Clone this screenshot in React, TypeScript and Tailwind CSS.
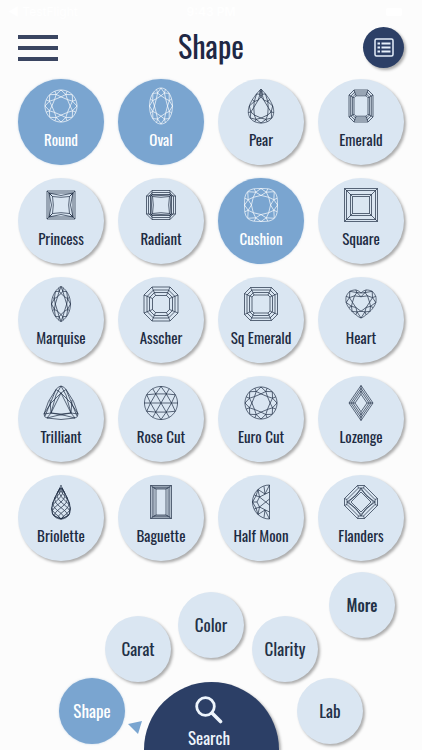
import { useState } from "react";
import type { ReactNode } from "react";

type Point = [number, number];
type Outline = (t: number) => Point;

const TAU = Math.PI * 2;

const poly = (points: Point[], close = true) =>
  "M" + points.map(([x, y]) => `${x.toFixed(2)} ${y.toFixed(2)}`).join("L") + (close ? "Z" : "");

const trace = (outline: Outline, steps = 96) =>
  poly(Array.from({ length: steps }, (_, i) => outline((i / steps) * TAU)));

/* A brilliant cut: girdle, eight kite facets and a star around the table. */
function brilliant(outline: Outline, cy = 0, star = 0.8, table = 0.6) {
  const at = (k: number, scale: number): Point => {
    const [x, y] = outline(((k % 16) / 16) * TAU);
    return [x * scale, cy + (y - cy) * scale];
  };
  let d = trace(outline);
  for (let k = 0; k < 16; k += 2) {
    d += poly([at(k, table), at(k + 1, star), at(k + 2, table)], false);
    d += poly([at(k, table), at(k + 2, table)], false);
    d += poly([at(k, 1), at(k + 1, star), at(k + 2, 1)], false);
    d += poly([at(k + 1, star), at(k + 1, 1)], false);
  }
  return d;
}

const ellipse = (a: number, b: number): Outline => (t) => [a * Math.sin(t), -b * Math.cos(t)];
const pear: Outline = (t) => [16.5 * Math.sin(t) * Math.abs(Math.sin(t / 2)), -17 * Math.cos(t)];
const marquise: Outline = (t) => [9.5 * Math.sin(t) * Math.sqrt(Math.abs(Math.sin(t))), -17.5 * Math.cos(t)];
const cushion: Outline = (t) => {
  const s = Math.sin(t);
  const c = Math.cos(t);
  const r = 16.5 / Math.pow(Math.abs(s) ** 3.2 + Math.abs(c) ** 3.2, 1 / 3.2);
  return [r * s, -r * c];
};

/* Radii of the heart from its notch round to its tip, every 22.5 degrees. */
const heartRadii = [9.5, 13.6, 15.8, 16, 14.8, 13.2, 12.6, 13.2, 15.5];
const heart: Outline = (t) => {
  const turn = Math.min(t, TAU - t) / (TAU / 16);
  const i = Math.min(7, Math.floor(turn));
  const r = heartRadii[i] + (heartRadii[i + 1] - heartRadii[i]) * (turn - i);
  return [r * Math.sin(t), -1.5 - r * Math.cos(t)];
};

const octagon = (w: number, h: number, c: number): Point[] => [
  [-w + c, -h], [w - c, -h], [w, -h + c], [w, h - c],
  [w - c, h], [-w + c, h], [-w, h - c], [-w, -h + c],
];
const rect = (w: number, h: number): Point[] => [[-w, -h], [w, -h], [w, h], [-w, h]];

/* Nested outlines with a ridge from each outer corner to the inner one. */
const steps = (layers: Point[][]) => {
  const inner = layers[layers.length - 1];
  return layers.map((l) => poly(l)).join("") + layers[0].map((p, i) => poly([p, inner[i]], false)).join("");
};

/* Pointed facets between a square of half-width r and a table of half-width s. */
const squareStar = (r: number, s: number) => {
  let d = "";
  for (let i = 0; i < 4; i++) {
    const a = (i * Math.PI) / 2;
    const side = (points: Point[]) =>
      poly(
        points.map(([x, y]): Point => [x * Math.cos(a) - y * Math.sin(a), x * Math.sin(a) + y * Math.cos(a)]),
        false,
      );
    d += side([[-r, -r], [-s, -s], [0, -s + 0.8], [s, -s], [r, -r]]);
    d += side([[-r, -r], [0, -s - 1], [r, -r]]);
  }
  return d;
};

function roseCut() {
  const p = (k: number, r: number): Point => [r * Math.cos((k * TAU) / 12), r * Math.sin((k * TAU) / 12)];
  let d = trace(ellipse(16.5, 16.5));
  for (let k = 0; k < 12; k += 2) {
    d += poly([[0, 0], p(k, 16.5)], false) + poly([p(k, 10.5), p(k + 2, 10.5)], false);
    d += poly([p(k, 10.5), p(k + 1, 16.5), p(k + 2, 10.5)], false);
  }
  return d;
}

function briolette() {
  const drop: Outline = (t) => [13.2 * Math.sin(t) * Math.abs(Math.sin(t / 2)) ** 1.5, -17 * Math.cos(t)];
  const at = (row: number, col: number): Point => {
    const y = -17 + (row / 12) * 34;
    const [half] = drop(Math.acos(-y / 17));
    return [half * Math.sin((Math.max(-4, Math.min(4, col)) / 8) * Math.PI), y];
  };
  let d = trace(drop);
  for (let row = 1; row < 12; row++) {
    for (let col = -4 + (row % 2); col <= 4; col += 2) {
      d += poly([at(row + 1, col - 1), at(row, col), at(row + 1, col + 1)], false);
    }
  }
  return d;
}

const halfMoon =
  "M8.500-17V17A17 17 0 0 1 8.500-17ZM8.500-10L-1.500-5-4 0-1.500 5 8.500 10M-1.500-5L8.500 3M-1.500 5L8.500-3" +
  "M-8.500 0L-4 0M-6.800-7L-1.500-5M-6.800 7L-1.500 5M-8.500 0L-5-6 -3-12.500M-8.500 0L-5 6-3 12.500M-3-12.500L-1.500-5M-3 12.500L-1.500 5" +
  "M-3-12.500L4-8 8.500-17M-3 12.500L4 8 8.500 17M3-15.600L4-8M3 15.600L4 8";

const trilliant =
  "M0-17Q3-16.500 5-13.500Q14-2 17 11Q17 14.500 14 15Q0 18-14 15Q-17 14.500-17 11Q-14-2-5-13.500Q-3-16.500 0-17Z" +
  "M0-10L10 10Q0 12-10 10ZM0-17L-5-8-10 10M0-17L5-8 10 10M-5-13.500L0-10 5-13.500M-17 11L-10 0 0-10M17 11L10 0 0-10" +
  "M-11-3L-10 10-14 15M11-3L10 10 14 15M-14 15L-4 12.500 10 10M14 15L4 12.500-10 10M-17 11L-10 10M17 11L10 10" +
  "M-16 13L-5-13.500M16 13L5-13.500";

const flanders =
  steps([octagon(16.5, 16.5, 13), octagon(14, 14, 11.5)]) +
  "M0-12.500L12.500 0 0 12.500-12.500 0ZM0-10L10 0 0 10-10 0Z" +
  "M0-14L-5-6.500-14 0-5 6.500 0 14 5 6.500 14 0 5-6.500Z";

const glyphs: Record<string, string> = {
  Round: brilliant(ellipse(16, 16), 0, 0.78, 0.57),
  Oval: brilliant(ellipse(11.5, 18), 0, 0.78, 0.57),
  Pear: brilliant(pear, 4, 0.8, 0.62),
  Emerald: steps([octagon(12, 16, 5), octagon(10.3, 14, 4.2), octagon(8.6, 12, 3.2), octagon(7, 10.2, 2)]),
  Princess: steps([rect(14, 14), rect(12, 12)]) + squareStar(12, 8.5),
  Radiant: steps([octagon(14.5, 14.5, 5.5), octagon(12.5, 12.5, 4), octagon(10.5, 10.5, 1.5)]) + squareStar(10, 8.5),
  Cushion: brilliant(cushion, 0, 0.79, 0.58),
  Square: steps([rect(16.5, 16.5), rect(14.5, 14.5), rect(10.5, 10.5), rect(8.5, 8.5)]),
  Marquise: brilliant(marquise, 0, 0.79, 0.6),
  Asscher: steps([octagon(17, 17, 8), octagon(14, 14, 6.5), octagon(11.5, 11.5, 5), octagon(8.5, 8.5, 3)]),
  "Sq Emerald": steps([octagon(16.5, 16.5, 6), octagon(14, 14, 5), octagon(11.5, 11.5, 4), octagon(9, 9, 2)]),
  Heart: brilliant(heart, -2, 0.78, 0.58),
  Trilliant: trilliant,
  "Rose Cut": roseCut(),
  "Euro Cut": brilliant(ellipse(16, 16), 0, 0.78, 0.57),
  Lozenge: steps([1, 0.84, 0.68, 0.5].map((s): Point[] => [[0, -17.5 * s], [12 * s, 0], [0, 17.5 * s], [-12 * s, 0]])),
  Briolette: briolette(),
  Baguette: steps([rect(10.5, 16.5), rect(8.8, 15), rect(7.1, 14), rect(5, 13)]),
  "Half Moon": halfMoon,
  Flanders: flanders,
};

const raised = "shadow-[2px_2px_3px_rgba(0,0,0,0.32)]";
const flat = "shadow-[0_0_2px_rgba(123,165,208,0.5)]";

function ShapeButton({ name, on, onToggle }: { name: string; on: boolean; onToggle: () => void }) {
  return (
    <button
      type="button"
      aria-pressed={on}
      onClick={onToggle}
      className={`flex aspect-square flex-col items-center rounded-full pt-2 ${
        on ? `bg-[#7aa5d0] text-white ${flat}` : `bg-[#dae6f2] text-[#1d2b42] ${raised}`
      }`}
    >
      <svg viewBox="-19 -19 38 38" className="size-[38px]" fill="none" stroke="currentColor" strokeWidth="0.7" aria-hidden="true">
        <path d={glyphs[name]} />
      </svg>
      <span className="mt-0.5 text-[15px] leading-6 whitespace-nowrap">{name}</span>
    </button>
  );
}

function MenuButton({ place, active, children }: { place: string; active?: boolean; children: ReactNode }) {
  return (
    <button
      type="button"
      className={`size-[66px] rounded-full ${place} ${
        active ? `bg-[#7aa5d0] text-white ${flat}` : `bg-[#dae6f2] text-[#233147] ${raised}`
      }`}
    >
      {children}
    </button>
  );
}

export default function App() {
  const [selected, setSelected] = useState(["Round", "Oval", "Cushion"]);
  const toggle = (name: string) =>
    setSelected((now) => (now.includes(name) ? now.filter((n) => n !== name) : [...now, name]));

  return (
    <div className="flex min-h-screen flex-col overflow-hidden bg-[#fcfcfc] font-['Oswald','Roboto_Condensed','Liberation_Sans_Narrow','Open_Sans_Condensed','Liberation_Sans',sans-serif]">
      <div className="grid h-6 grid-cols-3 items-center px-2 font-['Inter',sans-serif] text-xs text-white">
        <span>◀ TestFlight</span>
        <span className="text-center font-semibold">9:43 PM</span>
        <span className="mr-3 ml-auto h-2 w-4 rounded-xs bg-white" />
      </div>

      <header className="grid grid-cols-3 items-center px-[18px] pt-[3px]">
        <button type="button" aria-label="Menu" className="flex w-10 flex-col gap-[7px]">
          <span className="h-1 w-full bg-[#3a4561]" />
          <span className="h-1 w-full bg-[#3a4561]" />
          <span className="h-1 w-full bg-[#3a4561]" />
        </button>
        <h1 className="pb-1 text-center text-[30px] leading-9 text-[#1f2844]">Shape</h1>
        <button
          type="button"
          aria-label="Results list"
          className={`ml-auto flex size-[41px] items-center justify-center rounded-full bg-[#2c3f66] text-[#e6f0fb] ${raised}`}
        >
          <svg viewBox="0 0 20 20" className="size-5" fill="none" stroke="currentColor" strokeWidth="1.5" aria-hidden="true">
            <rect x="1" y="1" width="18" height="17" rx="1.5" />
            <path d="M3.500 5.500h2.500M3.500 9.500h2.500M3.500 13.500h2.500M7.500 5.500h9M7.500 9.500h9M7.500 13.500h9" strokeWidth="2" />
          </svg>
        </button>
      </header>

      <main className="grid grid-cols-4 gap-x-[14px] gap-y-[13px] px-[18px] pt-[11px]">
        {Object.keys(glyphs).map((name) => (
          <ShapeButton key={name} name={name} on={selected.includes(name)} onToggle={() => toggle(name)} />
        ))}
      </main>

      <nav aria-label="Criteria" className="relative mt-[11px] flex min-h-[178px] grow items-end justify-center text-[17px]">
        <MenuButton place="absolute top-0 right-[27px] text-base font-medium">More</MenuButton>
        <MenuButton place="absolute bottom-[6px] left-1/2 -ml-[152px]" active>Shape</MenuButton>
        <MenuButton place="absolute bottom-[68px] left-1/2 -ml-[106px]">Carat</MenuButton>
        <MenuButton place="absolute bottom-[92px] left-1/2 -ml-[33px]">Color</MenuButton>
        <MenuButton place="absolute bottom-[68px] left-1/2 ml-[41px]">Clarity</MenuButton>
        <MenuButton place="absolute bottom-[6px] left-1/2 ml-[86px]">Lab</MenuButton>
        <svg viewBox="0 0 14 13" className="absolute bottom-4 left-1/2 -ml-[83px] h-[13px] w-[14px]" aria-hidden="true">
          <path d="M0 3L14 0 10 13Z" fill="#7aa5d0" />
        </svg>
        <button
          type="button"
          className={`flex h-[68px] w-[135px] flex-col items-center rounded-t-full bg-[#2c3f66] pt-[14px] pr-1 leading-7 text-[#eef5fd] ${raised}`}
        >
          <svg viewBox="0 0 28 28" className="size-7 shrink-0" fill="none" stroke="currentColor" aria-hidden="true">
            <circle cx="10.500" cy="10.500" r="8.800" strokeWidth="2.800" />
            <path d="M17 17L25.500 25.500" strokeWidth="3.600" strokeLinecap="round" />
          </svg>
          Search
        </button>
      </nav>
    </div>
  );
}
